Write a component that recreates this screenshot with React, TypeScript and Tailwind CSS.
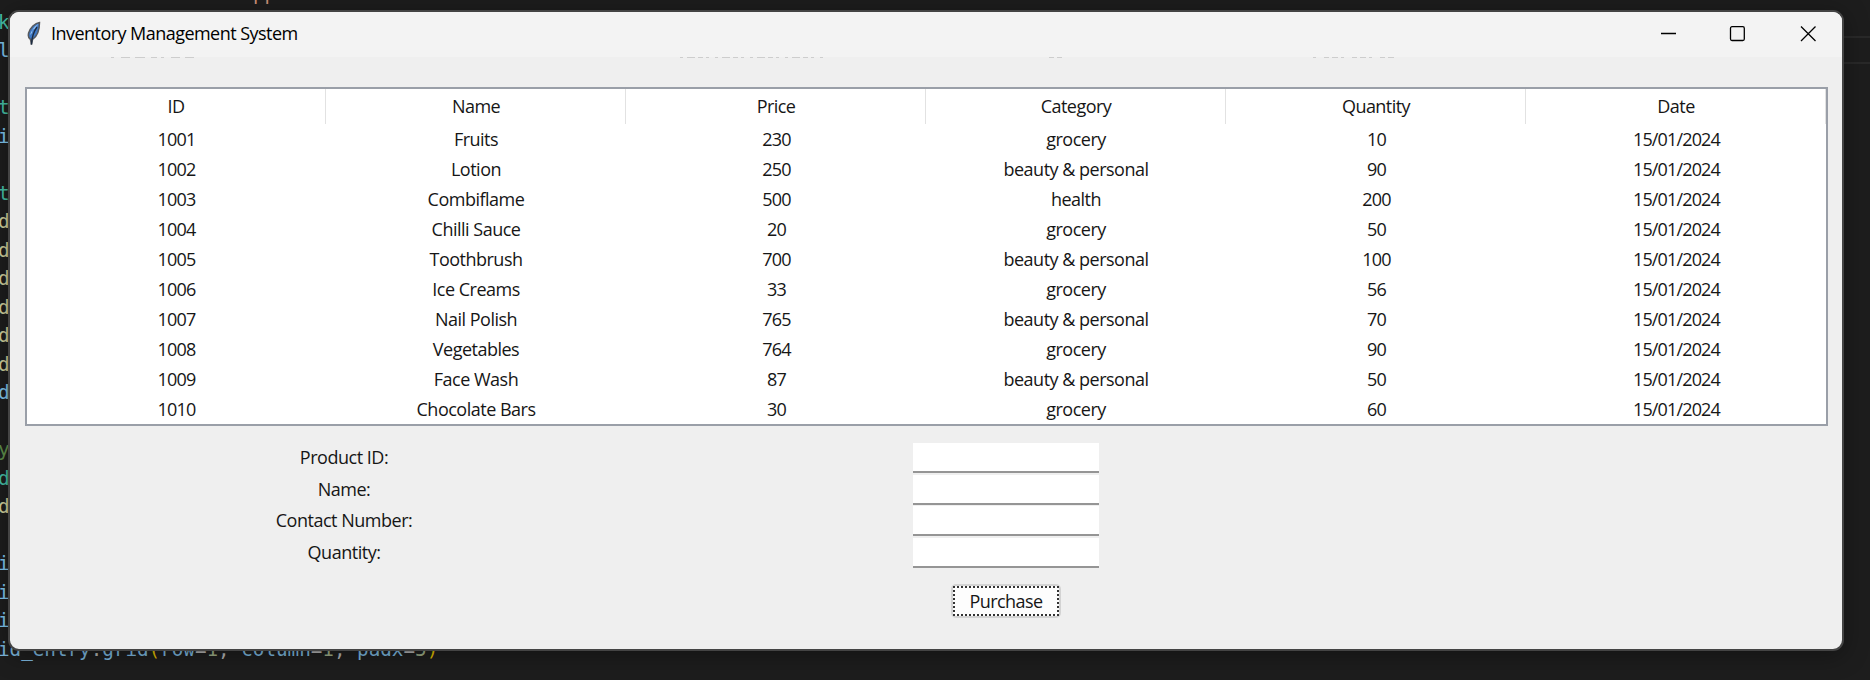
import React from "react";

const rows = [
  ["1001", "Fruits", "230", "grocery", "10"],
  ["1002", "Lotion", "250", "beauty & personal", "90"],
  ["1003", "Combiflame", "500", "health", "200"],
  ["1004", "Chilli Sauce", "20", "grocery", "50"],
  ["1005", "Toothbrush", "700", "beauty & personal", "100"],
  ["1006", "Ice Creams", "33", "grocery", "56"],
  ["1007", "Nail Polish", "765", "beauty & personal", "70"],
  ["1008", "Vegetables", "764", "grocery", "90"],
  ["1009", "Face Wash", "87", "beauty & personal", "50"],
  ["1010", "Chocolate Bars", "30", "grocery", "60"],
];
const headers = ["ID", "Name", "Price", "Category", "Quantity", "Date"];
const labels = ["Product ID:", "Name:", "Contact Number:", "Quantity:"];

const teal = "text-[#45bfa6]";
const sky = "text-[#7fc4ee]";
const cream = "text-[#cfcf9c]";
const green = "text-[#5f8f4a]";
const code: [string, string][] = [
  ["", sky], ["k", teal], ["l", sky], ["", sky], ["t", teal], ["i", sky], ["", sky], ["t", teal],
  ["d", cream], ["d", cream], ["d", cream], ["d", cream], ["d", cream], ["d", cream], ["d", sky],
  ["", sky], ["y", green], ["d", teal], ["d", cream], ["", sky], ["i", sky], ["i", sky], ["i", sky],
];

function Editor() {
  return (
    <div className="absolute inset-0 overflow-hidden bg-[#1d1d1d] font-['DejaVu_Sans_Mono',monospace] text-[19.3px] leading-[28.5px]">
      <div className="absolute top-[36px] right-0 h-[28px] w-[40px] border-y-2 border-[#292929]" />
      <div className="absolute top-[-20px] left-[253px] text-[#ce9178]">pp</div>
      <div className="-mt-[20px] -ml-[2px] whitespace-pre">
        {code.map(([t, c], i) => (
          <div key={i} className={`h-[28.5px] ${c}`}>{t}</div>
        ))}
        <div className="h-[28.5px] tracking-[-0.03px] text-[#7bb5dc]">
          id_entry<span className="text-[#b0b0b0]">.</span>grid<span className="text-[#dcb900]">(</span>row
          <span className="text-[#b0b0b0]">=</span><span className="text-[#9aaa85]">1</span>
          <span className="text-[#b0b0b0]">, </span>column<span className="text-[#b0b0b0]">=</span>
          <span className="text-[#9aaa85]">1</span><span className="text-[#b0b0b0]">, </span>padx
          <span className="text-[#b0b0b0]">=</span><span className="text-[#9aaa85]">5</span>
          <span className="text-[#dcb900]">)</span>
        </div>
      </div>
    </div>
  );
}

function Feather() {
  return (
    <svg width="14" height="25" viewBox="0 0 14 25" className="shrink-0">
      <path d="M12.500 1.500 C8 2 3 7 1.600 12 C1 15 1.500 17.500 3.500 18.500 L4.500 23.500 L5.500 18.500 C10 15.500 12.500 9 12.500 1.500 Z" fill="#3f78c4" stroke="#56595e" strokeWidth="1.500" />
      <path d="M11.500 3 C8 4.500 4.500 9 3 14 L5 12 L5.500 9 L8 7.500 Z" fill="#94c0ee" />
      <path d="M10 6 C7 10 5 14 4.400 23.500" stroke="#1d2c42" strokeWidth="1.400" fill="none" />
    </svg>
  );
}

function ScrollTraces() {
  return (
    <svg className="absolute top-[45px] left-0" width="1832" height="1" fill="none" stroke="#cdcdcd">
      <path d="M101 .5H184" strokeDasharray="3 7 9 5 10 6 6 4" />
      <path d="M670 .5H816" strokeDasharray="3 4 8 3 5 3 3 6" />
      <path d="M1039 .5H1052" strokeDasharray="5 3" />
      <path d="M1303 .5H1386" strokeDasharray="3 8 5 3 6 3" />
    </svg>
  );
}

export default function App() {
  return (
    <div className="relative h-[680px] w-[1870px] overflow-hidden bg-[#1d1d1d]">
      <Editor />
      <main className="absolute top-[10px] left-[8px] flex h-[641px] w-[1836px] flex-col overflow-hidden rounded-[11px] border-2 border-[#444444] bg-[#efefef] font-['Open_Sans','Noto_Sans',sans-serif] text-[18px] text-[#161616] shadow-[0_4px_24px_rgba(0,0,0,0.35)]">
        <header className="flex h-[45px] shrink-0 items-center bg-[#f3f3f3] pb-[2px] pl-[17px] text-black">
          <Feather />
          <span className="ml-[10px] tracking-[-0.54px]">Inventory Management System</span>
          <svg className="mr-[26px] ml-auto" width="156" height="17" viewBox="0 0 156 17" fill="none" stroke="#000" strokeWidth="1.300">
            <path d="M1 8.500H16" />
            <rect x="70.500" y="1.700" width="13.800" height="13.800" rx="1.500" />
            <path d="M141 1.500L155.500 16M155.500 1.500L141 16" />
          </svg>
        </header>
        <ScrollTraces />
        <section className="mx-[15px] mt-[30px] h-[339px] w-[1803px] shrink-0 border-2 border-[#9a9fa8] bg-white">
          <div className="-ml-px grid h-[35px] w-[1800px] grid-cols-6">
            {headers.map((h) => (
              <div key={h} className="flex items-center justify-center border-r border-[#e2e2e2] pl-px tracking-[-0.55px]">{h}</div>
            ))}
          </div>
          {rows.map((r) => (
            <div key={r[0]} className="-ml-px grid h-[30px] w-[1800px] grid-cols-6 text-center leading-[30px]">
              {[...r, "15/01/2024"].map((c, i) => (
                <div key={i} className={i === 1 || i === 3 ? "tracking-[-0.5px]" : "pl-px tracking-[-0.85px]"}>{c}</div>
              ))}
            </div>
          ))}
        </section>
        <form className="mt-[16px] flex">
          <div className="w-[668px] text-center leading-[31.5px] tracking-[-0.48px]">
            {labels.map((l) => <div key={l}>{l}</div>)}
          </div>
          <div className="ml-[235px] flex w-[186px] flex-col items-center">
            {labels.map((l) => (
              <div key={l} className="h-[31.5px] w-full pt-px">
                <input className="block h-[30px] w-full border-b-2 border-[#959595] bg-white outline-none" />
              </div>
            ))}
            <button type="button" className="mt-[16px] h-[34px] w-[110px] rounded-[5px] border-2 border-[#d3d3d3] bg-[#fdfdfd]">
              <span className="flex h-full items-center justify-center border-2 border-dotted border-[#333] pt-px tracking-[-0.55px]">Purchase</span>
            </button>
          </div>
        </form>
      </main>
    </div>
  );
}
